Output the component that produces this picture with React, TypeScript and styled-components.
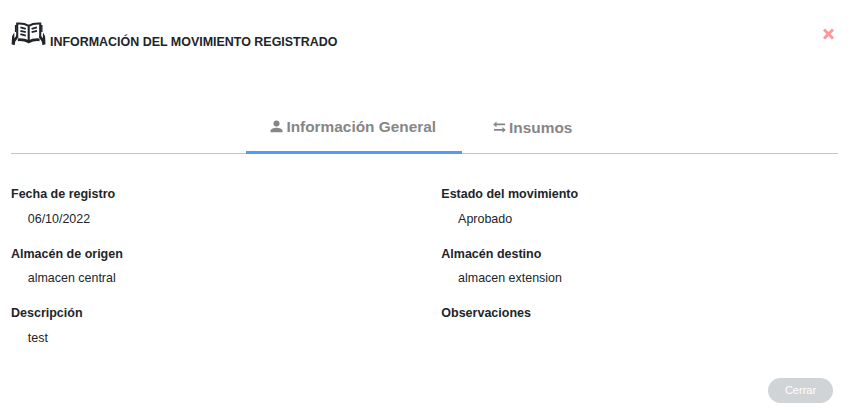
import React from 'react';
import styled, { createGlobalStyle } from 'styled-components';

const GlobalStyle = createGlobalStyle`
  * { box-sizing: border-box; }
  body { margin: 0; background: #fff; color: #212529; font-family: "Liberation Sans", Arial, sans-serif; }
`;
const Dialog = styled.main`
  width: 860px;
  height: 411px;
  padding: 20px 22px 0 11px;
  display: flex;
  flex-direction: column;
`;
const Header = styled.header`
  height: 86px;
  display: flex;
  align-items: flex-start;
  justify-content: space-between;
`;
const Title = styled.h1`
  margin: 0;
  display: flex;
  gap: 4px;
  font-size: 12.46px;
  line-height: 15px;
  white-space: nowrap;
  span { margin-top: 15px; }
`;
const CloseButton = styled.button`
  margin: 8px 4px 0 0;
  padding: 0;
  border: 0;
  background: none;
  display: flex;
`;
const Tabs = styled.nav`
  height: 48px;
  display: flex;
  padding-left: 234.5px;
  border-bottom: 1px solid #a3cbfb;
`;
const Tab = styled.button<{ $active?: boolean }>`
  width: ${p => (p.$active ? 216 : 143)}px;
  height: 48px;
  padding: ${p => (p.$active ? 3 : 5)}px 0 6px;
  border: 0;
  border-bottom: 3px solid ${p => (p.$active ? '#4f9bf7' : 'transparent')};
  background: none;
  color: #868686;
  font: bold 15.4px "Liberation Sans", Arial, sans-serif;
  white-space: nowrap;
  display: flex;
  align-items: center;
  justify-content: center;
  gap: 3px;
  svg { margin: -2px 0 0 -0.5px; }
`;
const Details = styled.dl`
  margin: 33px 0 0;
  display: grid;
  grid-template-columns: 430.3px 1fr;
  grid-auto-rows: 59.5px;
`;
const Label = styled.dt`
  font-size: 12.5px;
  line-height: 15px;
  font-weight: bold;
`;
const Value = styled.dd`
  margin: 9.7px 0 0 16.8px;
  font-size: 12.46px;
  line-height: 15px;
`;
const Footer = styled.footer`
  display: flex;
  justify-content: flex-end;
  padding: 12px 5px 0 0;
`;
const DismissButton = styled.button`
  width: 65px;
  height: 25px;
  padding: 0;
  border: 0;
  border-radius: 13px;
  background: #d0d4d7;
  color: #fff;
  font: 11px "Liberation Sans", Arial, sans-serif;
`;

const fields = [
  ['Fecha de registro', '06/10/2022'],
  ['Estado del movimiento', 'Aprobado'],
  ['Almacén de origen', 'almacen central'],
  ['Almacén destino', 'almacen extension'],
  ['Descripción', 'test'],
  ['Observaciones', ''],
];

const BookIcon = () => (
  <svg width="35" height="28" viewBox="0 0 35 28" fill="none" stroke="#212529">
    <path strokeWidth="2.1" d="M6.2 18V3.6Q13 3.1 17.7 5.8Q22.4 3.1 29.2 3.6V18M17.7 5.6V21.5" />
    <path strokeWidth="1.4" d="M4.6 12V5.8H6.5M30.8 12V5.8H29" />
    <path strokeWidth="2.8" d="M6.8 19.8Q13.2 19.3 17.7 21.8Q22.2 19.3 28.6 19.8" />
    <path strokeWidth="1.8" d="M9.4 7.4L14.8 8.8M9.4 10.8L14.8 12.2M9.4 14.2L14.8 15.6M26 7.4L20.6 8.8M26 10.8L20.6 12.2" />
    <path fill="#212529" stroke="none" d="M3.2 12.4L1.1 16.2L.6 24.2L3.7 25.2L4.2 21.8L6.5 18.5L6.3 14.2L4.8 16.4L3.4 18.2ZM32 12.4L34.1 16.2L34.5 24.2L31.4 25.2L30.9 21.8L28.7 18.5L28.9 14.2L30.4 16.4L31.8 18.2Z" />
  </svg>
);

export default function App() {
  return (
    <>
      <GlobalStyle />
      <Dialog>
        <Header>
          <Title>
            <BookIcon />
            <span>INFORMACIÓN DEL MOVIMIENTO REGISTRADO</span>
          </Title>
          <CloseButton aria-label="Cerrar">
            <svg width="12" height="12" viewBox="0 0 12 12" stroke="#ff9797" strokeWidth="3"><path d="M2 1.5l9 9M11 1.5l-9 9" /></svg>
          </CloseButton>
        </Header>
        <Tabs>
          <Tab $active>
            <svg width="13" height="13" viewBox="0 0 13 13" fill="#868686"><circle cx="6.5" cy="3.4" r="3" /><path d="M.5 12.3V10.8C.5 8.8 4 7.7 6.5 7.7S12.5 8.8 12.5 10.8V12.3Z" /></svg>
            Información General
          </Tab>
          <Tab>
            <svg width="13" height="12" viewBox="0 0 13 12" fill="#868686"><path d="M.2 3.4 3.5.6V2.5H12V4.3H3.5V6.2ZM12.8 8.9 9.5 6.1V8H1V9.8H9.5V11.7Z" /></svg>
            Insumos
          </Tab>
        </Tabs>
        <Details>
          {fields.map(([label, value]) => (
            <div key={label}>
              <Label>{label}</Label>
              <Value>{value}</Value>
            </div>
          ))}
        </Details>
        <Footer><DismissButton>Cerrar</DismissButton></Footer>
      </Dialog>
    </>
  );
}
